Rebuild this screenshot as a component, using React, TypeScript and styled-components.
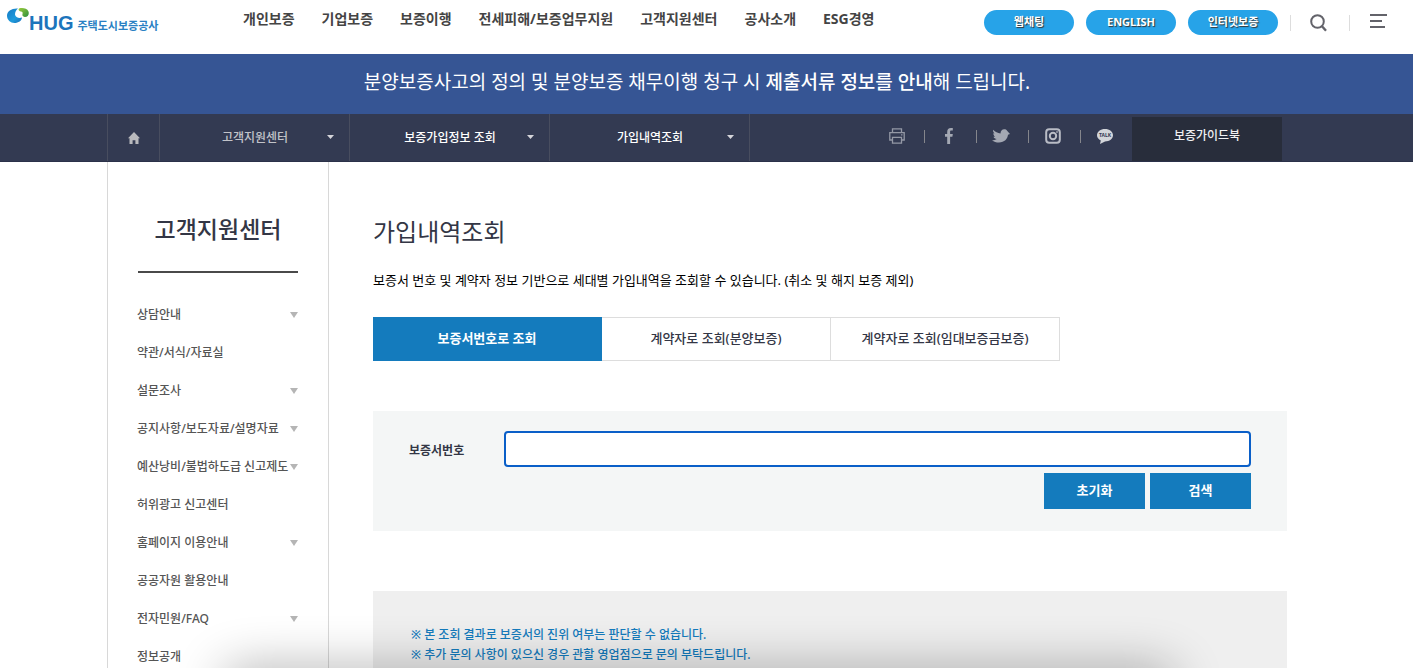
import React from 'react';
import styled, { createGlobalStyle } from 'styled-components';

const GlobalStyle = createGlobalStyle`
  *, *::before, *::after { box-sizing: border-box; }
  body {
    margin: 0;
    background: #fff;
    color: #333;
    font-family: "Noto Sans", "Noto Sans CJK KR", sans-serif;
    font-size: 12px;
    line-height: 20px;
  }
  a { color: inherit; text-decoration: none; }
  ul { list-style: none; margin: 0; padding: 0; }
  h1, h2, p { margin: 0; }
  button, input { font-family: inherit; }
  button { border: 0; padding: 0; cursor: pointer; }
`;

const Page = styled.div`
  height: 100vh;
  overflow: hidden;
  display: flex;
  flex-direction: column;
`;

const Header = styled.header`
  flex: none;
  display: flex;
  align-items: flex-start;
  height: 54px;
  padding: 0 26px 0 7px;
`;

const Logo = styled.a`
  display: flex;
  align-items: flex-start;
  width: 236px;
  padding-top: 7px;
  color: #1c75bc;
`;

const LogoMark = styled.svg`
  flex: none;
  width: 22px;
  height: 18px;
`;

const LogoName = styled.span`
  display: flex;
  align-items: baseline;
  gap: 4px;
  padding-top: 6px;
  font-size: 11px;
  font-weight: 700;
  color: #2a80c3;
  white-space: nowrap;
`;

const LogoInitials = styled.strong`
  font-family: "Liberation Sans", Arial, sans-serif;
  font-size: 20px;
  color: #1c75bc;
`;

const MainNav = styled.ul`
  display: flex;
  gap: 27px;
  padding-top: 9px;
  font-size: 14px;
  font-weight: 700;
  color: #444;
  white-space: nowrap;
`;

const HeaderTools = styled.div`
  display: flex;
  align-items: center;
  gap: 12px;
  height: 25px;
  margin: 10px 0 0 auto;
`;

const Pill = styled.a`
  width: 90px;
  height: 25px;
  border-radius: 13px;
  background: #27a3e8;
  color: #fff;
  font-size: 11px;
  font-weight: 700;
  line-height: 23px;
  text-align: center;
  text-shadow: 1px 1px 1px #333;
`;

const ToolDivider = styled.i`
  width: 1px;
  height: 16px;
  background: #ddd;
`;

const IconButton = styled.button`
  display: flex;
  align-items: center;
  justify-content: center;
  width: 34px;
  height: 24px;
  padding-right: 3px;
  background: none;
  color: #63636a;
`;

const MenuButton = styled(IconButton)`
  justify-content: flex-end;
  width: 25px;
  height: 28px;
  padding: 0 0 4px;
`;

const Banner = styled.div`
  flex: none;
  height: 60px;
  padding-right: 19px;
  background: #365594;
  color: #fff;
  font-size: 19px;
  line-height: 57px;
  text-align: center;
  white-space: nowrap;
  b { font-weight: 500; }
`;

const PathBar = styled.nav`
  flex: none;
  height: 48px;
  padding-right: 19px;
  background: #333a52;
  border-bottom: 1px solid #2b3149;
`;

const Container = styled.div`
  display: flex;
  max-width: 1180px;
  margin: 0 auto;
`;

const HomeLink = styled.a`
  display: flex;
  align-items: center;
  justify-content: center;
  width: 52px;
  height: 47px;
  border-left: 1px solid #484d5f;
`;

const Crumb = styled.button<{ $wide?: boolean; $dim?: boolean }>`
  display: grid;
  grid-template-columns: 1fr auto;
  align-items: center;
  width: ${(p) => (p.$wide ? 200 : 190)}px;
  height: 47px;
  padding: 0 15px 1px 23px;
  border-left: 1px solid #484d5f;
  background: none;
  color: ${(p) => (p.$dim ? '#c2c3c9' : '#fff')};
  font-size: 12px;
  font-weight: 500;
`;

const CrumbEnd = styled.i`
  width: 1px;
  height: 47px;
  background: #484d5f;
`;

const ShareList = styled.ul`
  display: flex;
  align-items: center;
  height: 44px;
  margin-left: auto;
  margin-right: 1px;
`;

const ShareItem = styled.li`
  display: flex;
  align-items: center;
  justify-content: center;
  width: 52px;
  a {
    display: flex;
    justify-content: center;
    width: 18px;
  }
  & + &::before {
    content: "";
    width: 1px;
    height: 13px;
    margin-right: 15px;
    margin-left: -16px;
    background: #85868c;
  }
`;

const GuideLink = styled.a`
  width: 150px;
  height: 44px;
  margin: 3px 5px 0 0;
  background: #282d3b;
  color: #f0f0f2;
  font-weight: 500;
  line-height: 38px;
  text-align: center;
`;

const Body = styled.div`
  flex: 1;
  min-height: 0;
  padding-right: 19px;
  ${Container} { height: 100%; }
`;

const Sidebar = styled.aside`
  flex: none;
  width: 222px;
  padding: 47px 30px 0;
  border: solid #d8d8d8;
  border-width: 0 1px;
`;

const SideTitle = styled.h2`
  height: 64px;
  margin-bottom: 23px;
  border-bottom: 2px solid #4a4a4a;
  color: #333645;
  font-size: 23px;
  font-weight: 500;
  line-height: 40px;
  text-align: center;
`;

const SideLink = styled.a`
  display: flex;
  align-items: center;
  justify-content: space-between;
  height: 38px;
  margin-left: -1px;
  color: #555;
  font-weight: 500;
  white-space: nowrap;
`;

const Content = styled.main`
  flex: 1;
  min-width: 0;
  padding: 50px 0 0 44px;
`;

const Title = styled.h1`
  color: #333645;
  font-size: 24px;
  font-weight: 400;
  line-height: 40px;
`;

const Lead = styled.p`
  margin: 18px 0 27px;
  color: #000;
  font-size: 13px;
`;

const Tabs = styled.div`
  display: flex;
  max-width: 687px;
  height: 44px;
`;

const Tab = styled.button<{ $active?: boolean }>`
  flex: 1;
  border: solid ${(p) => (p.$active ? '#147bbd' : '#ddd')};
  border-width: 1px 1px 1px 0;
  background: ${(p) => (p.$active ? '#147bbd' : '#fff')};
  color: ${(p) => (p.$active ? '#fff' : '#333645')};
  font-size: 13px;
  font-weight: ${(p) => (p.$active ? 700 : 500)};
  line-height: 20px;
  padding-bottom: 2px;
`;

const SearchForm = styled.form`
  margin-top: 50px;
  padding: 20px 36px 22px;
  background: #f4f6f6;
`;

const Field = styled.div`
  display: flex;
  align-items: center;
  label {
    width: 95px;
    padding-top: 3px;
    color: #333645;
    font-weight: 700;
  }
  input {
    flex: 1;
    min-width: 0;
    height: 36px;
    padding: 0 10px;
    border: 2px solid #0a5fc8;
    border-radius: 4px;
    background: #fff;
    font-size: 13px;
    outline: 0;
  }
`;

const Actions = styled.div`
  display: flex;
  justify-content: flex-end;
  gap: 5px;
  margin-top: 6px;
`;

const ActionButton = styled.button`
  width: 101px;
  height: 36px;
  padding-bottom: 3px;
  background: #147bbd;
  color: #fff;
  font-size: 13px;
  font-weight: 700;
`;

const Notice = styled.section`
  height: 200px;
  margin-top: 60px;
  padding: 34px 38px;
  background: #efefef;
  color: #147bbd;
  font-weight: 500;
`;

const DockShadow = styled.div`
  position: fixed;
  right: 237px;
  bottom: -40px;
  left: 222px;
  height: 40px;
  border-radius: 20px;
  box-shadow: 0 0 50px rgba(0, 0, 0, 0.32);
  pointer-events: none;
`;

const Caret = () => (
  <svg width="7" height="4" viewBox="0 0 7 4" aria-hidden="true">
    <path d="M0 0h7L3.500 4z" fill="#d5d5da" />
  </svg>
);

const SideArrow = () => (
  <svg width="8" height="6" viewBox="0 0 8 6" aria-hidden="true">
    <path d="M0 0h8L4 6z" fill="#b5b5b5" />
  </svg>
);

const navItems = ['개인보증', '기업보증', '보증이행', '전세피해/보증업무지원', '고객지원센터', '공사소개', 'ESG경영'];

const sideItems: [string, boolean][] = [
  ['상담안내', true],
  ['약관/서식/자료실', false],
  ['설문조사', true],
  ['공지사항/보도자료/설명자료', true],
  ['예산낭비/불법하도급 신고제도', true],
  ['허위광고 신고센터', false],
  ['홈페이지 이용안내', true],
  ['공공자원 활용안내', false],
  ['전자민원/FAQ', true],
  ['정보공개', false],
];

const shareItems: { name: string; icon: React.ReactNode }[] = [
  {
    name: '인쇄',
    icon: (
      <svg width="16" height="16" viewBox="0 0 16 16" fill="none" stroke="#9498a5" strokeWidth="1.300">
        <path d="M3.500 4.500V.8h9v3.700M3.500 12H.8V4.600h14.400V12h-2.700M3.500 9.400h9v5.800h-9zM12 6.800h1.500" />
      </svg>
    ),
  },
  {
    name: '페이스북',
    icon: (
      <svg width="8" height="16" viewBox="0 0 8 16" fill="#a4a8b3">
        <path d="M2.200 16V8.700H0V6h2.200V4c0-2.500 1.300-4 3.700-4h1.900v2.600H6.400c-1 0-1.300.5-1.300 1.400v2h2.700l-.4 2.700H5.100V16z" />
      </svg>
    ),
  },
  {
    name: '트위터',
    icon: (
      <svg width="18" height="14" viewBox="0 0 18 14" fill="#a4a8b3">
        <path d="M1.200.8c2 2.200 4.500 3.200 7.300 3.700C8.500 2 10 .3 12.200.3c1.300 0 2.200.5 2.900 1.400L18 5l-2 .8C15.500 10 12.500 13.500 7 13.500c-2.800 0-5-.8-7-2.300 1.800 0 3.500-.2 4.700-1.200-1.700-.2-2.700-1-3.200-2.300h1.600C1.800 6.800 1.300 5.600 1.300 4.300l1.200.3C1.300 3.400.8 2 1.200.8z" />
      </svg>
    ),
  },
  {
    name: '인스타그램',
    icon: (
      <svg width="16" height="16" viewBox="0 0 16 16" fill="none" stroke="#b9bcc5" strokeWidth="2">
        <rect x="1.200" y="1.200" width="13.600" height="13.600" rx="3" />
        <circle cx="8" cy="8" r="3.200" />
        <circle cx="12" cy="4" r=".5" strokeWidth="1" />
      </svg>
    ),
  },
  {
    name: '카카오톡',
    icon: (
      <svg width="16" height="16" viewBox="0 0 16 16">
        <path d="M8 1c4.500 0 8 2.700 8 6.200s-3.500 6.200-8 6.200L3 16l.8-3.500C1.500 11.400 0 9.500 0 7.200 0 3.700 3.500 1 8 1z" fill="#d3d5da" />
        <text x="8" y="9.400" textAnchor="middle" fontSize="5" fontWeight="700" fill="#333a52">TALK</text>
      </svg>
    ),
  },
];

export default function App() {
  return (
    <Page>
      <GlobalStyle />
      <Header>
        <Logo href="#">
          <LogoMark viewBox="0 0 22 18" aria-hidden="true">
            <defs>
              <linearGradient id="drop" x1="0" y1="0" x2="1" y2="1">
                <stop offset="0" stopColor="#1679c4" />
                <stop offset=".6" stopColor="#1e9bdc" />
                <stop offset="1" stopColor="#1b6fb8" />
              </linearGradient>
              <linearGradient id="leaf" x1="0" y1="0" x2="1" y2="1">
                <stop offset="0" stopColor="#9acb3c" />
                <stop offset="1" stopColor="#2c8f3e" />
              </linearGradient>
            </defs>
            <path d="M11 1.500C5 1 0 4 0 8.800 0 13 3.500 16 7.500 16c4 0 7.200-2.300 7.500-5.500-3 1-6.500 0-7-3C8 5 9 3 11 1.500z" fill="url(#drop)" />
            <path d="M12 1.500C15 .5 20 1 21.500 4.500c1 3-.8 5.500-3.500 5.500-1.800 0-3-1.300-2.500-3 .4-1.400 0-2.200-1.500-2.500-2-.3-3-1.800-2-3z" fill="url(#leaf)" />
          </LogoMark>
          <LogoName>
            <LogoInitials>HUG</LogoInitials>
            주택도시보증공사
          </LogoName>
        </Logo>
        <nav>
          <MainNav>
            {navItems.map((item) => (
              <li key={item}><a href="#">{item}</a></li>
            ))}
          </MainNav>
        </nav>
        <HeaderTools>
          <Pill href="#">웹채팅</Pill>
          <Pill href="#">ENGLISH</Pill>
          <Pill href="#">인터넷보증</Pill>
          <ToolDivider />
          <IconButton type="button" aria-label="검색">
            <svg width="17" height="18" viewBox="0 0 17 18" fill="none" stroke="currentColor" strokeWidth="2">
              <circle cx="7.500" cy="7.500" r="6.300" />
              <path d="M12 12.300l4 4.500" strokeWidth="2.400" />
            </svg>
          </IconButton>
          <ToolDivider />
          <MenuButton type="button" aria-label="전체메뉴">
            <svg width="17" height="14" viewBox="0 0 17 14" fill="currentColor">
              <path d="M0 0h17v2H0zM0 6h12v2H0zM0 12h15v2H0z" />
            </svg>
          </MenuButton>
        </HeaderTools>
      </Header>

      <Banner>
        분양보증사고의 정의 및 분양보증 채무이행 청구 시 <b>제출서류 정보를 안내</b>해 드립니다.
      </Banner>

      <PathBar>
        <Container>
          <HomeLink href="#" aria-label="홈">
            <svg width="12" height="12" viewBox="0 0 12 12" fill="#b9b9bd">
              <path d="M6 0l6 6.300h-1.500V12H7.400V8.300H4.600V12H1.500V6.300H0z" />
            </svg>
          </HomeLink>
          <Crumb type="button" $dim>고객지원센터<Caret /></Crumb>
          <Crumb type="button" $wide>보증가입정보 조회<Caret /></Crumb>
          <Crumb type="button" $wide>가입내역조회<Caret /></Crumb>
          <CrumbEnd />
          <ShareList>
            {shareItems.map((s) => (
              <ShareItem key={s.name}><a href="#" aria-label={s.name}>{s.icon}</a></ShareItem>
            ))}
          </ShareList>
          <GuideLink href="#">보증가이드북</GuideLink>
        </Container>
      </PathBar>

      <Body>
        <Container>
          <Sidebar>
            <SideTitle>고객지원센터</SideTitle>
            <ul>
              {sideItems.map(([name, hasChildren]) => (
                <li key={name}>
                  <SideLink href="#">{name}{hasChildren && <SideArrow />}</SideLink>
                </li>
              ))}
            </ul>
          </Sidebar>
          <Content>
            <Title>가입내역조회</Title>
            <Lead>보증서 번호 및 계약자 정보 기반으로 세대별 가입내역을 조회할 수 있습니다. (취소 및 해지 보증 제외)</Lead>
            <Tabs role="tablist">
              <Tab type="button" role="tab" aria-selected="true" $active>보증서번호로 조회</Tab>
              <Tab type="button" role="tab" aria-selected="false">계약자로 조회(분양보증)</Tab>
              <Tab type="button" role="tab" aria-selected="false">계약자로 조회(임대보증금보증)</Tab>
            </Tabs>
            <SearchForm onSubmit={(e) => e.preventDefault()}>
              <Field>
                <label htmlFor="guarantee-no">보증서번호</label>
                <input id="guarantee-no" type="text" />
              </Field>
              <Actions>
                <ActionButton type="reset">초기화</ActionButton>
                <ActionButton type="submit">검색</ActionButton>
              </Actions>
            </SearchForm>
            <Notice>
              <p>※ 본 조회 결과로 보증서의 진위 여부는 판단할 수 없습니다.</p>
              <p>※ 추가 문의 사항이 있으신 경우 관할 영업점으로 문의 부탁드립니다.</p>
            </Notice>
          </Content>
        </Container>
      </Body>
      <DockShadow />
    </Page>
  );
}
